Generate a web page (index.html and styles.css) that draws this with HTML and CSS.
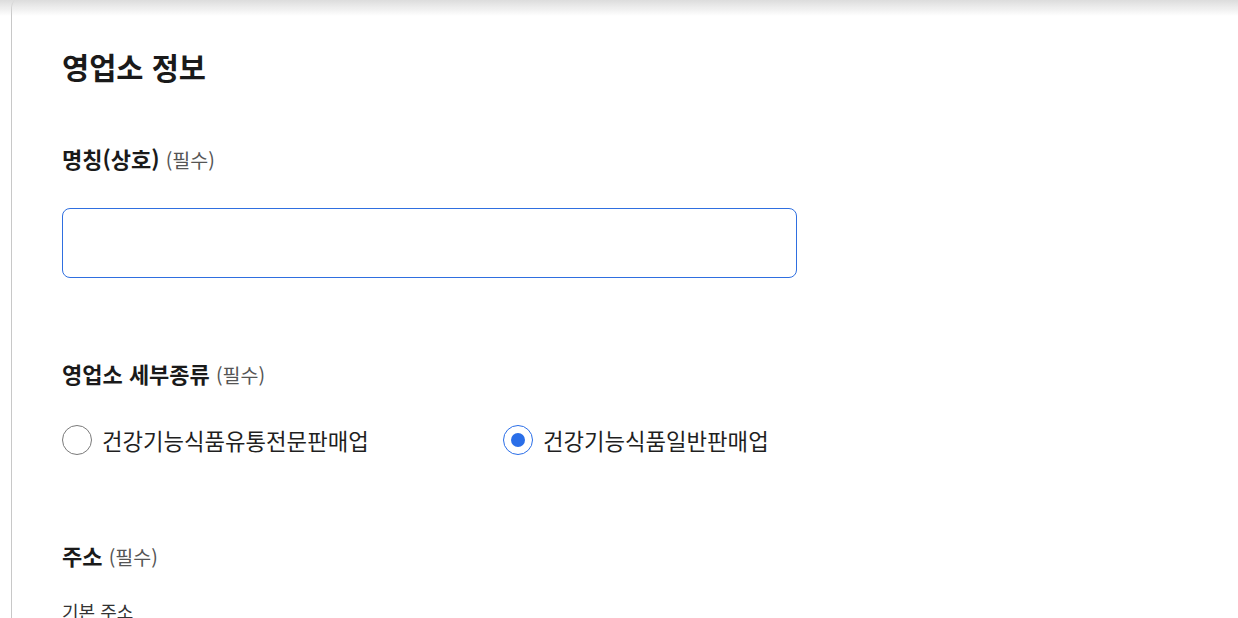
FILE: index.html
```html
<!DOCTYPE html>
<html lang="ko">
<head>
<meta charset="utf-8">
<title>영업소 정보</title>
<link rel="stylesheet" href="styles.css">
</head>
<body>
<div class="top-shadow"></div>
<main class="card">
  <h1 class="title">영업소 정보</h1>

  <section class="field field-name">
    <div class="label"><strong>명칭(상호)</strong> <span class="req">(필수)</span></div>
    <input class="text-input" type="text">
  </section>

  <section class="field field-kind">
    <div class="label"><strong>영업소 세부종류</strong> <span class="req">(필수)</span></div>
    <div class="radios">
      <label class="radio-opt">
        <span class="radio"></span>
        <span class="radio-text">건강기능식품유통전문판매업</span>
      </label>
      <label class="radio-opt">
        <span class="radio checked"></span>
        <span class="radio-text">건강기능식품일반판매업</span>
      </label>
    </div>
  </section>

  <section class="field field-addr">
    <div class="label"><strong>주소</strong> <span class="req">(필수)</span></div>
    <div class="sub-label">기본 주소</div>
  </section>
</main>
</body>
</html>
```

FILE: styles.css
```css
html, body {
  margin: 0;
  padding: 0;
  background: #ffffff;
  height: 100%;
  overflow: hidden;
}
body {
  font-family: "Noto Sans CJK KR", "Noto Sans", sans-serif;
  color: #1a1a1a;
}
.top-shadow {
  position: fixed;
  left: 0;
  top: 0;
  right: 0;
  height: 16px;
  background: linear-gradient(to bottom, #dcdcdc 0%, rgba(255,255,255,0) 100%);
  pointer-events: none;
  z-index: 2;
}
.card {
  margin-left: 11px;
  margin-top: -4px;
  border-left: 1px solid #c8c8c8;
  border-top: 1px solid #c8c8c8;
  border-top-left-radius: 12px;
  padding-left: 50px;
  padding-top: 49px;
  min-height: 700px;
}
.title {
  margin: 0;
  font-size: 29.5px;
  font-weight: 700;
  line-height: 40px;
  color: #1a1a1a;
}
.field-name {
  margin-top: 58px;
}
.label {
  font-size: 22px;
  line-height: 28px;
  height: 28px;
  white-space: nowrap;
}
.label strong {
  font-weight: 700;
  color: #1a1a1a;
}
.req {
  font-size: 19.5px;
  color: #555555;
  font-weight: 400;
}
.text-input {
  display: block;
  box-sizing: border-box;
  margin-top: 36px;
  width: 735px;
  height: 70px;
  border: 1px solid #2f6fe0;
  border-radius: 8px;
  outline: none;
  background: #fff;
  padding: 0 16px;
  font-family: inherit;
  font-size: 18px;
}
.field-kind {
  margin-top: 81px;
}
.radios {
  display: flex;
  margin-top: 38px;
}
.radio-opt {
  display: flex;
  align-items: center;
  gap: 10px;
  width: 441px;
  height: 30px;
}
.radio {
  box-sizing: border-box;
  width: 30px;
  height: 30px;
  border-radius: 50%;
  border: 1px solid #7a7a7a;
  display: flex;
  align-items: center;
  justify-content: center;
  flex: none;
}
.radio.checked {
  border: 1.5px solid #2a6ee8;
}
.radio.checked::after {
  content: "";
  width: 14px;
  height: 14px;
  border-radius: 50%;
  background: #2a6ee8;
}
.radio-text {
  font-size: 22.3px;
  line-height: 30px;
  color: #1f1f1f;
  white-space: nowrap;
}
.field-addr {
  margin-top: 86px;
}
.sub-label {
  margin-top: 30px;
  font-size: 18px;
  line-height: 24px;
  color: #333;
}
```
